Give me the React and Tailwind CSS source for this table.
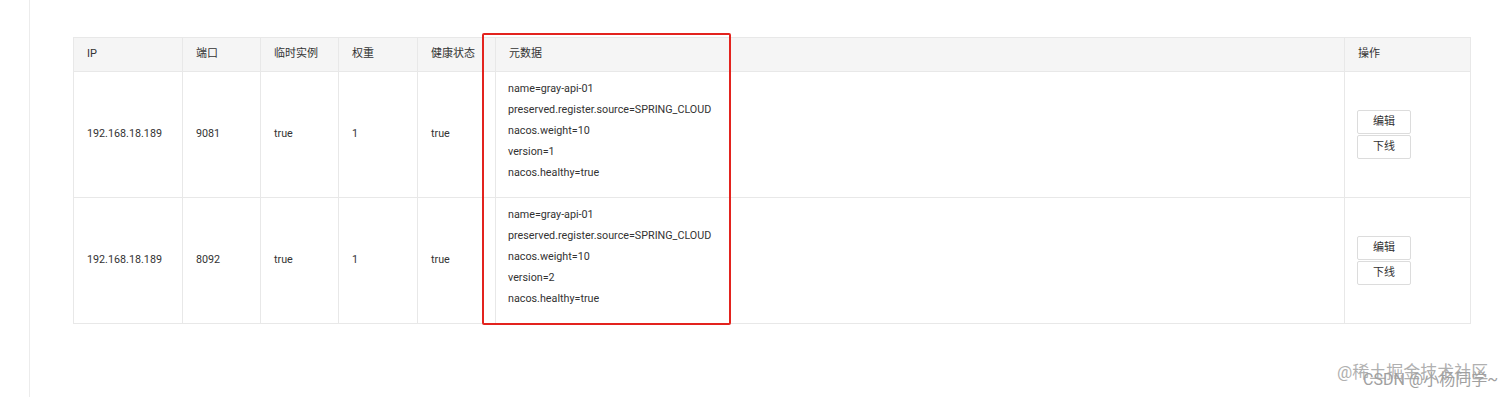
import React from 'react';

const cols = [
  { key: 'ip', label: 'IP', width: 109 },
  { key: 'port', label: '端口', width: 78 },
  { key: 'ephemeral', label: '临时实例', width: 78 },
  { key: 'weight', label: '权重', width: 79 },
  { key: 'healthy', label: '健康状态', width: 78 },
  { key: 'meta', label: '元数据', width: 849 },
  { key: 'ops', label: '操作', width: 126 },
];

const rows = [
  {
    ip: '192.168.18.189',
    port: '9081',
    ephemeral: 'true',
    weight: '1',
    healthy: 'true',
    meta: ['name=gray-api-01', 'preserved.register.source=SPRING_CLOUD', 'nacos.weight=10', 'version=1', 'nacos.healthy=true'],
  },
  {
    ip: '192.168.18.189',
    port: '8092',
    ephemeral: 'true',
    weight: '1',
    healthy: 'true',
    meta: ['name=gray-api-01', 'preserved.register.source=SPRING_CLOUD', 'nacos.weight=10', 'version=2', 'nacos.healthy=true'],
  },
];

const font = { fontFamily: 'Roboto, "Noto Sans CJK SC", sans-serif' };

export default function App() {
  return (
    <div className="h-[397px] w-[1512px] bg-white pl-[29px] overflow-hidden text-[#333]" style={font}>
      <div className="relative h-full border-l border-[#ececec] pl-[43px] pt-[37px]">
        <table className="table-fixed border-collapse w-[1397px] text-[11px]">
          <colgroup>
            {cols.map(c => (
              <col key={c.key} style={{ width: c.width }} />
            ))}
          </colgroup>
          <thead>
            <tr className="h-[34px] bg-[#f5f5f5]">
              {cols.map(c => (
                <th key={c.key} className="border border-[#e8e8e8] px-[13px] text-left font-normal text-[#333]">
                  {c.label}
                </th>
              ))}
            </tr>
          </thead>
          <tbody className="text-[10.75px]">
            {rows.map((r, i) => (
              <tr key={i} className="h-[126px]">
                <td className="border border-[#e8e8e8] px-[13px]">{r.ip}</td>
                <td className="border border-[#e8e8e8] px-[13px]">{r.port}</td>
                <td className="border border-[#e8e8e8] px-[13px]">{r.ephemeral}</td>
                <td className="border border-[#e8e8e8] px-[13px]">{r.weight}</td>
                <td className="border border-[#e8e8e8] px-[13px]">{r.healthy}</td>
                <td className="border border-[#e8e8e8] px-[12px] pt-[6px] pb-[13px] align-top">
                  {r.meta.map(m => (
                    <div key={m} className="leading-[21px]">{m}</div>
                  ))}
                </td>
                <td className="border border-[#e8e8e8] px-[12px]">
                  <div className="flex flex-col gap-[1px] w-[54px]">
                    <button className="h-[24px] w-[54px] rounded-[2px] border border-[#dcdcdc] bg-white text-[11px] text-[#333]">编辑</button>
                    <button className="h-[24px] w-[54px] rounded-[2px] border border-[#dcdcdc] bg-white text-[11px] text-[#333]">下线</button>
                  </div>
                </td>
              </tr>
            ))}
          </tbody>
        </table>

        {/* red annotation box */}
        <div className="absolute left-[452px] top-[33px] h-[292px] w-[249px] rounded-[2px] border-2 border-[#e3231e]" />

        {/* watermarks */}
        <div className="absolute left-[1307px] top-[364px] text-[17px] leading-none text-[#b0b0b0] whitespace-nowrap">
          @稀土掘金技术社区
        </div>
        <div className="absolute left-[1333px] top-[372px] text-[16px] leading-none text-[#a0a0a0] whitespace-nowrap">
          CSDN @小杨同学~
        </div>
      </div>
    </div>
  );
}
